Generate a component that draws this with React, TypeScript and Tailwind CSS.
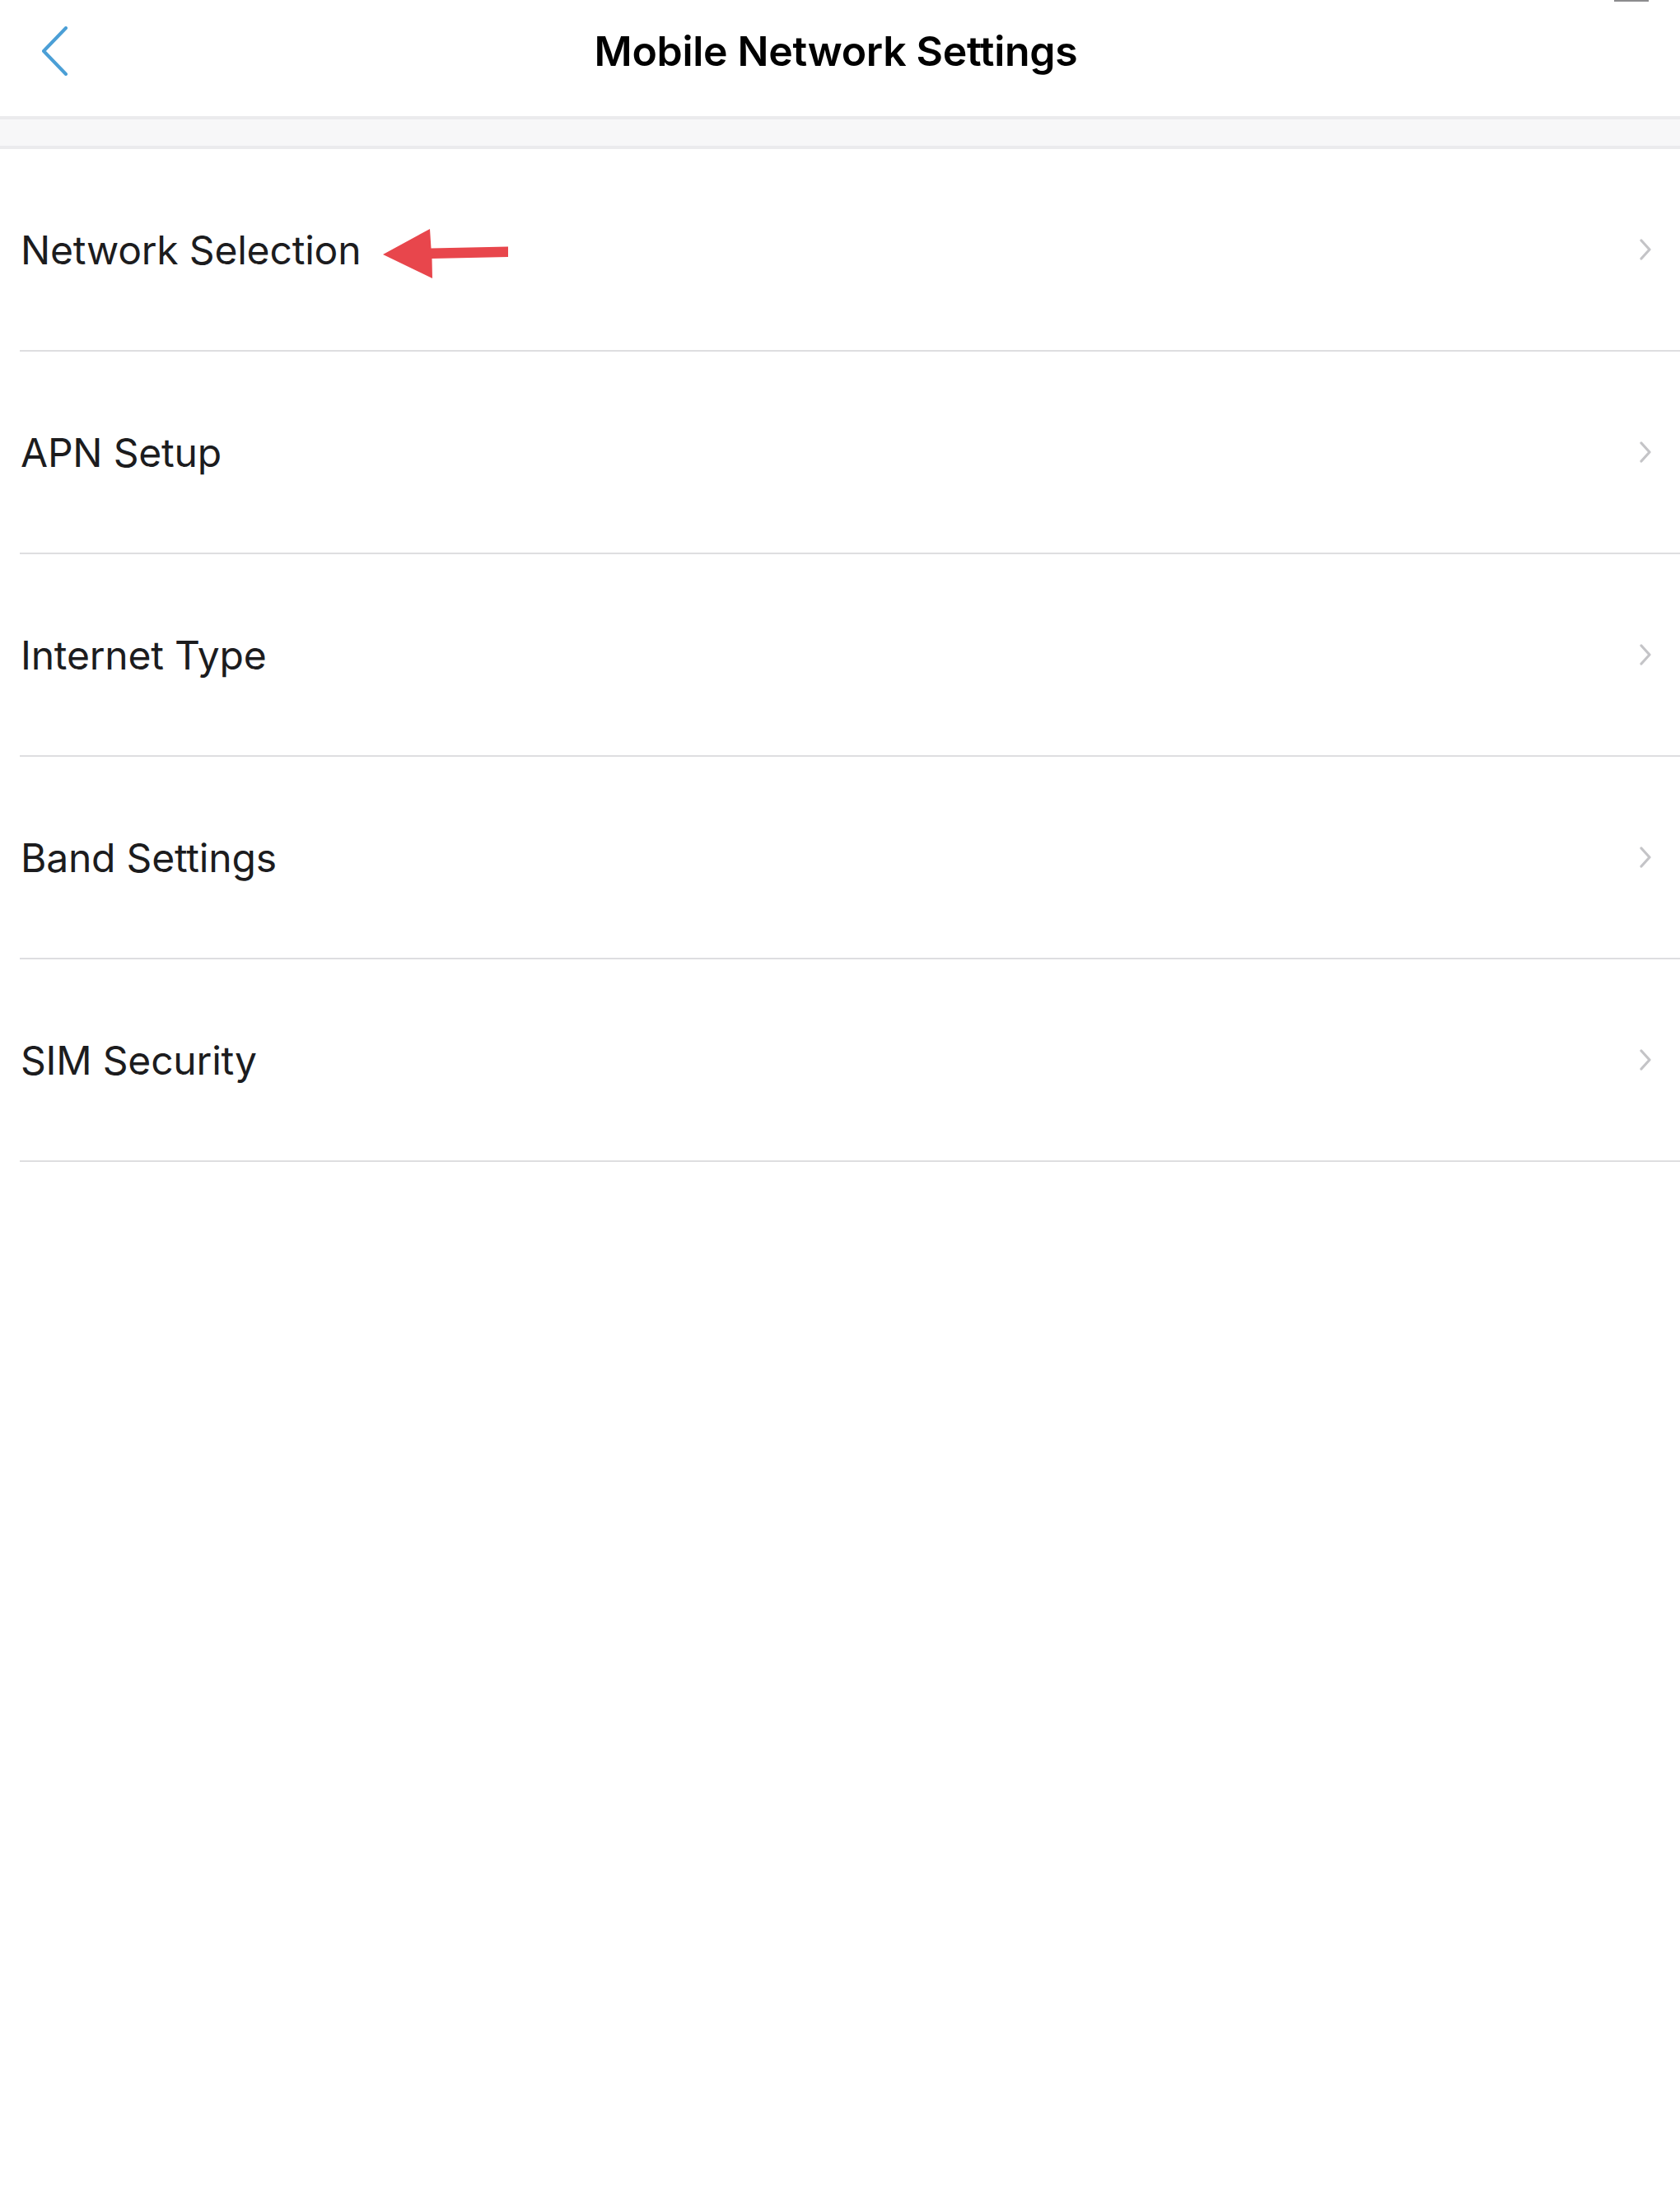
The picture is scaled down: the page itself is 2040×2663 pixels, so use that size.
import React from "react";

const rows = ["Network Selection", "APN Setup", "Internet Type", "Band Settings", "SIM Security"];

function Chevron() {
  return (
    <svg width="16" height="26" viewBox="0 0 16 26" fill="none">
      <path d="M3 2 L13 13 L3 24" stroke="#c4c4c7" strokeWidth="3.2" strokeLinecap="round" strokeLinejoin="round" />
    </svg>
  );
}

function RedArrow() {
  return (
    <svg width="154" height="62" viewBox="0 0 154 62" className="absolute left-[440px] top-[96px]">
      <path d="M1 32 L58 1 L59.5 24.5 L153 22.5 L153 35 L60.5 37 L61 61 Z" fill="#e8464c" />
    </svg>
  );
}

export default function App() {
  return (
    <div className="min-h-[2663px] w-full bg-white text-[#1c1c1e]" style={{ fontFamily: "Inter, 'Liberation Sans', sans-serif" }}>
      <div className="relative h-[141px] grid grid-cols-[1fr_auto_1fr] items-center">
        <div className="pl-[50px] -translate-y-[9px]">
          <svg width="34" height="60" viewBox="0 0 34 60" fill="none">
            <path d="M30 2 L3 30 L30 58" stroke="#4b9fd6" strokeWidth="4" strokeLinecap="round" strokeLinejoin="round" />
          </svg>
        </div>
        <h1 className="text-[50px] font-semibold text-black tracking-[-0.3px] leading-none -translate-x-[5px] -translate-y-[9px]">Mobile Network Settings</h1>
        <div />
        <div className="absolute right-[38px] top-0 h-[2px] w-[42px] bg-[#8c8c8e]" />
      </div>
      <div className="h-[40px] border-t-4 border-b-4 border-[#ebebed] bg-[#f7f7f8]" />
      <div className="pl-[24px]">
        {rows.map((r, i) => (
          <div
            key={r}
            className={`relative flex items-center justify-between border-b-2 border-[#dedee0] pr-[34px] ${i === 0 ? "h-[246px]" : "h-[246px]"}`}
          >
            <span className="pl-[1px] pt-[2px] text-[48px] tracking-[-0.2px] text-[#1c1c1e]">{r}</span>
            <Chevron />
            {i === 0 && <RedArrow />}
          </div>
        ))}
      </div>
    </div>
  );
}
